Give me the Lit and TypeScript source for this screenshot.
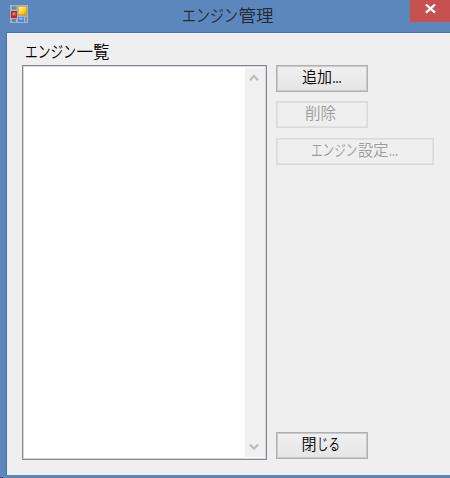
import { LitElement, html, svg, css } from "lit";
import { customElement, property } from "lit/decorators.js";

type Run = [text: string, x: number, width: number];

/* Text line whose kana and kanji runs have their own widths, as in a proportional UI gothic. */
@customElement("ui-text")
class UiText extends LitElement {
  static styles = css`
    :host { display: block; flex: none; }
    svg { display: block; overflow: visible; }
    text { font-family: "Noto Sans CJK JP", sans-serif; font-weight: 350; fill: currentColor; }
  `;
  @property({ attribute: false }) runs: Run[] = [];
  @property({ type: Number }) size = 16;
  @property({ type: Number }) width = 50;
  render() {
    return html`<svg width=${this.width} height="20" viewBox="0 0 ${this.width} 20">
      ${this.runs.map(([t, x, w]) => svg`<text x=${x} y="16" font-size=${this.size} textLength=${w} lengthAdjust="spacingAndGlyphs">${t}</text>`)}
    </svg>`;
  }
}

@customElement("app-root")
class AppRoot extends LitElement {
  static styles = css`
    * { box-sizing: border-box; }
    :host { display: block; width: 450px; height: 478px; overflow: hidden; }
    .window { position: relative; display: flex; flex-direction: column; height: 478px; background: #5b87bc; padding: 0 0 3px 6px; }
    .titlebar { display: flex; height: 32px; flex: none; color: #25282e; }
    .appicon { flex: none; margin: 5px 0 0 4px; }
    .title { margin: 6px 0 0 154px; }
    .close { margin-left: auto; width: 40px; height: 22px; border: 0; padding: 0; background: #c75050; display: block; }
    .close svg { display: block; }
    .client { flex: 1; display: flex; background: #efefef; border-top: 1px solid #4a72a6; border-left: 1px solid #4a72a6; padding: 8px 0 0 15px; color: #000; }
    .left { width: 245px; flex: none; }
    .label { height: 24px; padding: 1px 0 0 3px; }
    .list { display: flex; justify-content: flex-end; width: 245px; height: 395px; background: #fff; border: 1px solid #888a93; box-shadow: inset 0 0 0 1px #d5d5da; padding: 1px; }
    .scroll { width: 20px; margin: 1px 0; background: #f0f0f0; display: flex; flex-direction: column; justify-content: space-between; align-items: center; padding: 5px 3px 5px 0; }
    .scroll svg { display: block; }
    .right { display: flex; flex-direction: column; align-items: flex-start; padding: 24px 0 0 9px; height: 418px; }
    .btn { display: flex; justify-content: flex-start; width: 92px; height: 27px; padding: 1px 0 0; border: 1px solid #b0b0b0; box-shadow: inset 0 0 0 1px #cacaca; background: linear-gradient(#f0f0f0, #e5e5e5); color: #000; margin-bottom: 9px; }
    .btn:disabled { color: #9c9c9c; border-color: #dadada; box-shadow: inset 0 0 0 1px #e0e0e0; background: #efefef; }
    .btn.wide { width: 158px; margin-top: 1px; }
    .btn.last { margin: auto 0 0; }
    .corner { position: absolute; left: 0; bottom: 0; width: 3px; height: 1px; background: linear-gradient(90deg, #c01020 1px, #5b87bc 1px 2px, #10207a 2px); }
  `;
  render() {
    return html`<div class="window">
      <div class="titlebar">
        <svg class="appicon" width="18" height="18" viewBox="0 0 18 18">
          <defs><linearGradient id="y" x1="0" y1="0" x2="1" y2="1"><stop stop-color="#fff3a8"/><stop offset=".5" stop-color="#ffd43c"/><stop offset="1" stop-color="#e5a200"/></linearGradient></defs>
          <rect width="18" height="18" fill="#a9b3bf"/>
          <rect x="2" y="1.5" width="4.5" height="3" fill="#6185b7"/>
          <rect x="1" y="6" width="6" height="7" fill="#b72a26"/>
          <rect x="2.5" y="7.5" width="3" height="3" fill="#ea7768"/>
          <rect x="2" y="14" width="4" height="3" fill="#6185b7"/>
          <rect x="8" y="1" width="9" height="9.5" fill="#c98e10"/>
          <rect x="8.6" y="1.6" width="7.8" height="8" fill="url(#y)"/>
          <rect x="8" y="12" width="6" height="5" fill="#4b82e3"/>
          <rect x="9" y="12.7" width="4" height="2" fill="#87b5ff"/>
          <rect x="15" y="12" width="2" height="5" fill="#7892b6"/>
        </svg>
        <ui-text class="title" width="92" size="17.5" .runs=${[["エンジン", 0, 56], ["管理", 56.5, 35]]}></ui-text>
        <button class="close" aria-label="閉じる">
          <svg width="40" height="22" viewBox="0 0 40 22"><path d="M16 4.5 25 12.7M25 4.5 16 12.7" stroke="#fff" stroke-width="2.3"/></svg>
        </button>
      </div>
      <div class="client">
        <div class="left">
          <div class="label"><ui-text width="85" size="16.5" .runs=${[["エンジン", 0, 51], ["一覧", 51.5, 33]]}></ui-text></div>
          <div class="list"><div class="scroll">
            <svg width="10" height="9" viewBox="0 0 10 9"><path d="M1 7.2 5 3 9 7.2" fill="none" stroke="#bcbcbc" stroke-width="2.2"/></svg>
            <svg width="10" height="9" viewBox="0 0 10 9"><path d="M1 1.5 5 5.7 9 1.5" fill="none" stroke="#bcbcbc" stroke-width="2.2"/></svg>
          </div></div>
        </div>
        <div class="right">
          <button class="btn"><ui-text width="90" size="16" .runs=${[["追加", 25, 30], ["...", 55.5, 9]]}></ui-text></button>
          <button class="btn" disabled><ui-text width="90" size="16" .runs=${[["削除", 28, 31]]}></ui-text></button>
          <button class="btn wide" disabled><ui-text width="156" size="16" .runs=${[["エンジン", 34, 46.5], ["設定", 81, 30.5], ["...", 112, 9]]}></ui-text></button>
          <button class="btn last"><ui-text width="90" size="16" .runs=${[["閉", 24.5, 15], ["じる", 40, 23]]}></ui-text></button>
        </div>
      </div>
      <div class="corner"></div>
    </div>`;
  }
}
